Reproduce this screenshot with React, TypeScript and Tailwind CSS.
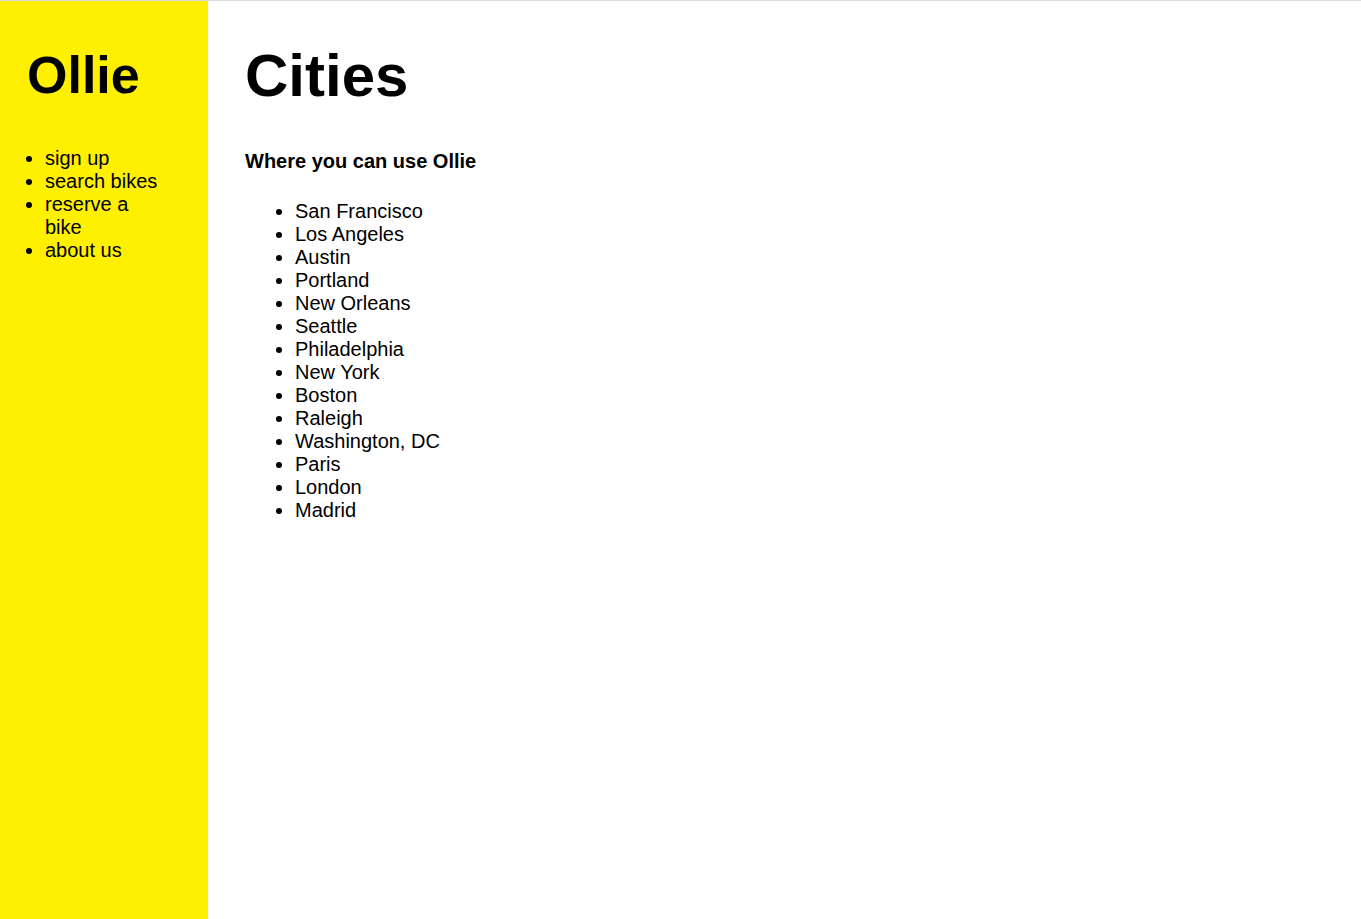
const cities = [
  'San Francisco',
  'Los Angeles',
  'Austin',
  'Portland',
  'New Orleans',
  'Seattle',
  'Philadelphia',
  'New York',
  'Boston',
  'Raleigh',
  'Washington, DC',
  'Paris',
  'London',
  'Madrid',
];

const navLinks = ['sign up', 'search bikes', 'reserve a bike', 'about us'];

export default function App() {
  return (
    <div className="min-h-screen flex flex-col bg-white text-black font-['Liberation_Sans',Arial,sans-serif]">
      {/* thin top rule */}
      <div className="h-px bg-[#dcdce0] shrink-0" />

      <div className="flex flex-1">
        {/* Sidebar */}
        <aside className="w-[208px] shrink-0 bg-[#fff000] pl-[27px] pr-[43px]">
          <h1 className="mt-[46px] text-[52px] leading-[56px] font-bold">Ollie</h1>
          <ul className="mt-[44px] list-disc pl-[18px] text-[20px] leading-[23px]">
            {navLinks.map((link) => (
              <li key={link}>{link}</li>
            ))}
          </ul>
        </aside>

        {/* Main content */}
        <main className="flex-1 pl-[37px]">
          <h1 className="mt-[41px] text-[60px] leading-[67px] font-bold">Cities</h1>
          <h2 className="mt-[41px] text-[20px] leading-[23px] font-bold">Where you can use Ollie</h2>
          <ul className="mt-[27px] list-disc pl-[50px] text-[20px] leading-[23px]">
            {cities.map((city) => (
              <li key={city}>{city}</li>
            ))}
          </ul>
        </main>
      </div>
    </div>
  );
}
